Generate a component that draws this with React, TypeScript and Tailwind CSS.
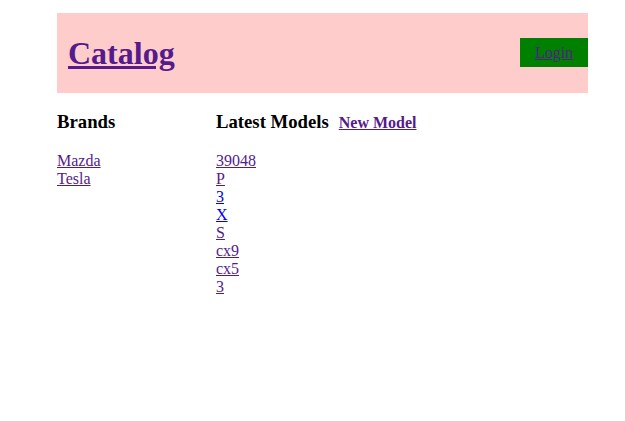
export default function App() {
  const brands = ["Mazda", "Tesla"];
  const models = [
    { name: "39048", visited: true },
    { name: "P", visited: true },
    { name: "3", visited: false },
    { name: "X", visited: false },
    { name: "S", visited: true },
    { name: "cx9", visited: true },
    { name: "cx5", visited: true },
    { name: "3", visited: true },
  ];

  return (
    <div className="min-h-[421px] bg-white pt-[13px] font-['Liberation_Serif',serif] text-black">
      <div className="ml-[57px] w-[531px]">
        <div className="flex h-[80px] items-center justify-between bg-[#ffcccc] pl-[11px]">
          <a href="#" className="text-[32px] font-bold text-[#551a8b] underline">
            Catalog
          </a>
          <a
            href="#"
            className="mb-[1px] flex h-[29px] w-[68px] items-center justify-center bg-[#008000] text-[16px] text-[#551a8b] underline"
          >
            Login
          </a>
        </div>

        <div className="mt-[18px] flex">
          <div className="w-[159px]">
            <h3 className="h-[21px] text-[18.72px] font-bold leading-[21px]">Brands</h3>
            <ul className="mt-[20px] text-[16px] leading-[18px]">
              {brands.map((b) => (
                <li key={b}>
                  <a href="#" className="text-[#551a8b] underline">
                    {b}
                  </a>
                </li>
              ))}
            </ul>
          </div>
          <div>
            <div className="flex h-[21px] items-baseline gap-[10px]">
              <h3 className="text-[18.72px] font-bold leading-[21px]">Latest Models</h3>
              <a href="#" className="text-[16px] font-bold leading-[21px] text-[#551a8b] underline">
                New Model
              </a>
            </div>
            <ul className="mt-[20px] text-[16px] leading-[18px]">
              {models.map((m, i) => (
                <li key={i}>
                  <a
                    href="#"
                    className={m.visited ? "text-[#551a8b] underline" : "text-[#0000ee] underline"}
                  >
                    {m.name}
                  </a>
                </li>
              ))}
            </ul>
          </div>
        </div>
      </div>
    </div>
  );
}
